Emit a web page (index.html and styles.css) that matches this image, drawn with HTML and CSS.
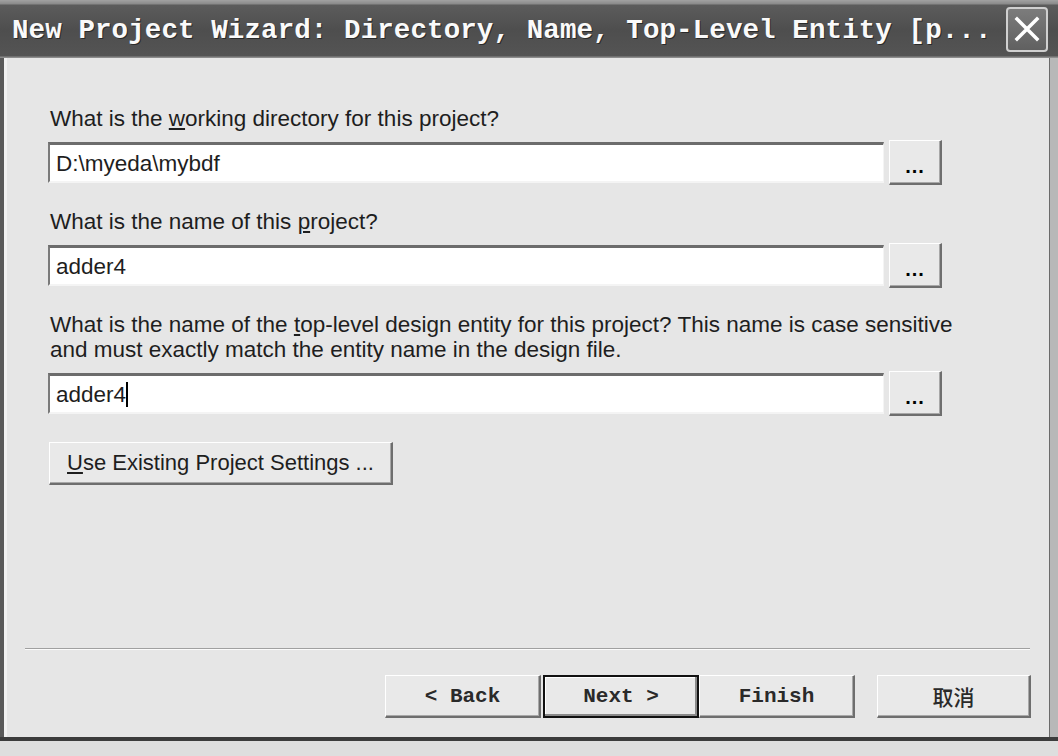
FILE: index.html
```html
<!DOCTYPE html>
<html lang="en">
<head>
    <meta charset="UTF-8">
    <title>New Project Wizard: Directory, Name, Top-Level Entity</title>
    <link rel="stylesheet" href="styles.css">
</head>
<body>
    <div class="window">
        <div class="titlebar">
            <span class="title">New Project Wizard: Directory, Name, Top-Level Entity [p...</span>
            <button class="close" aria-label="Close">
                <svg width="26" height="26" viewBox="0 0 26 26">
                    <path d="M3 3 L23 23 M23 3 L3 23" stroke="#fff" stroke-width="3.5" stroke-linecap="square"/>
                </svg>
            </button>
        </div>

        <div class="client">
            <div class="form">
                <div class="group">
                    <div class="label">What is the <u>w</u>orking directory for this project?</div>
                    <div class="row">
                        <div class="field">D:\myeda\mybdf</div>
                        <button class="btn browse">...</button>
                    </div>
                </div>

                <div class="group">
                    <div class="label">What is the name of this <u>p</u>roject?</div>
                    <div class="row">
                        <div class="field">adder4</div>
                        <button class="btn browse">...</button>
                    </div>
                </div>

                <div class="group">
                    <div class="label">What is the name of the <u>t</u>op-level design entity for this project? This name is case sensitive<br>and must exactly match the entity name in the design file.</div>
                    <div class="row">
                        <div class="field">adder4<span class="caret"></span></div>
                        <button class="btn browse">...</button>
                    </div>
                </div>

                <button class="btn settings"><u>U</u>se Existing Project Settings ...</button>
            </div>

            <div class="footer">
                <div class="separator"></div>
                <div class="actions">
                    <button class="btn nav">&lt; Back</button>
                    <button class="btn nav default">Next &gt;</button>
                    <button class="btn nav">Finish</button>
                    <button class="btn nav cancel">取消</button>
                </div>
            </div>
        </div>

        <div class="statusbar"></div>
    </div>
</body>
</html>
```

FILE: styles.css
```css
body {
    margin: 0;
    background: #e4e4e4;
}
.window {
    width: 1058px;
    height: 756px;
    display: flex;
    flex-direction: column;
    background: #e6e6e6;
    font-family: "Liberation Sans", Arial, sans-serif;
    color: #1e1e1e;
    overflow: hidden;
}

/* title bar */
.titlebar {
    height: 58px;
    box-sizing: border-box;
    display: flex;
    align-items: center;
    justify-content: space-between;
    padding: 2px 10px 0 12px;
    background: linear-gradient(#a2a2a2 0, #8a8a8a 4px, #5c5c5c 5px, #4e4e4e 30px, #545454 56px, #8c8c8c 57px);
}
.title {
    font-family: "Liberation Mono", "Courier New", monospace;
    font-weight: bold;
    font-size: 27.5px;
    letter-spacing: 0.1px;
    color: #fafafa;
    text-shadow: 1px 1px 0 #2a2a2a;
    white-space: nowrap;
}
.close {
    width: 42px;
    height: 45px;
    margin-top: -2px;
    padding: 0;
    display: flex;
    align-items: center;
    justify-content: center;
    background: linear-gradient(#7c7c7c, #606060);
    border: 2px solid #d0d0d0;
    border-radius: 4px;
}

/* dialog body */
.client {
    flex: 1;
    display: flex;
    flex-direction: column;
    border-left: 4px solid #5a5a5a;
    border-right: 8px solid #b8b8b8;
    box-shadow: inset 3px 0 0 #f2f2f2, inset -1px 0 0 #6a6a6a;
}
.form {
    flex: 1;
    display: flex;
    flex-direction: column;
    align-items: flex-start;
    padding: 48px 0 0 44px;
    gap: 25px;
}
.group {
    display: flex;
    flex-direction: column;
    gap: 9px;
}
.label {
    font-size: 22.5px;
    line-height: 25px;
    padding-left: 2px;
}
.row {
    display: flex;
    align-items: center;
    gap: 5px;
    width: 894px;
    height: 44px;
}
.field {
    flex: 1;
    height: 41px;
    box-sizing: border-box;
    display: flex;
    align-items: center;
    padding: 2px 6px 0 6px;
    font-size: 22.5px;
    background: #fff;
    border-top: 3px solid #6c6c6c;
    border-left: 2px solid #7a7a7a;
    border-bottom: 2px solid #f4f4f4;
    border-right: 1px solid #f4f4f4;
}
.caret {
    display: inline-block;
    width: 0;
    height: 25px;
    border-left: 2px solid #000;
}

/* buttons */
.btn {
    font-family: "Liberation Sans", Arial, sans-serif;
    color: #1e1e1e;
    background: #e9e9e9;
    border-top: 1px solid #fff;
    border-left: 1px solid #fff;
    border-right: 2px solid #6e6e6e;
    border-bottom: 2px solid #6e6e6e;
    box-shadow: inset -1px -1px 0 #a8a8a8;
    padding: 0;
    box-sizing: border-box;
}
.browse {
    width: 53px;
    height: 45px;
    font-weight: bold;
    font-size: 20px;
    letter-spacing: 1px;
    padding-top: 10px;
    color: #000;
}
.settings {
    margin-top: 2px;
    margin-left: 1px;
    width: 344px;
    height: 43px;
    font-size: 22px;
}

.footer {
    display: flex;
    flex-direction: column;
}
.separator {
    margin: 0 20px 0 21px;
    height: 1px;
    background: #a0a0a0;
    border-bottom: 1px solid #fbfbfb;
}
.actions {
    display: flex;
    justify-content: flex-end;
    padding: 25px 19px 19px 0;
}
.nav {
    width: 156px;
    height: 43px;
    font-family: "Liberation Mono", "Noto Sans CJK SC", monospace;
    font-weight: bold;
    font-size: 21px;
    color: #2a2a2a;
}
.nav.default {
    margin-left: 2px;
    border: 2px solid #111;
    box-shadow: inset -2px -2px 0 #8a8a8a, inset 1px 1px 0 #fff;
}
.nav.cancel {
    width: 154px;
    margin-left: 22px;
    font-family: "Noto Sans CJK SC", sans-serif;
    font-weight: 500;
}

.statusbar {
    height: 15px;
    border-top: 4px solid #3c3c3c;
    background: #dedede;
}
```
